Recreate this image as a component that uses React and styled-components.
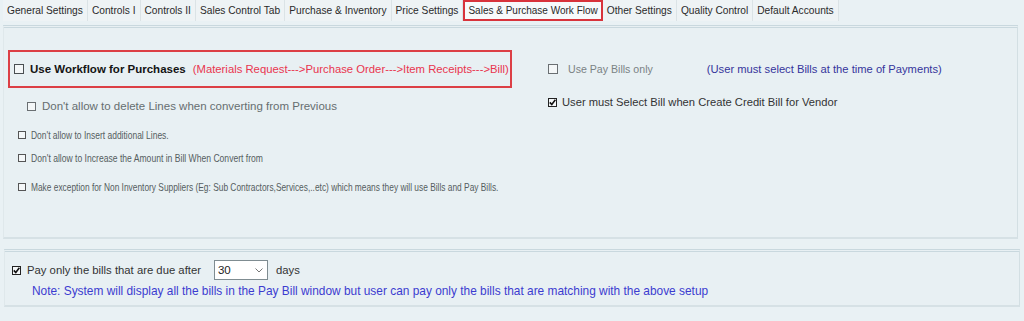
import React from "react";
import styled, { createGlobalStyle } from "styled-components";

const GlobalStyle = createGlobalStyle`
  html, body {
    margin: 0;
    padding: 0;
    background: #e9f1f4;
  }
  body {
    font-family: "Liberation Sans", Arial, sans-serif;
  }
`;

const Page = styled.div`
  width: 1024px;
  height: 321px;
  overflow: hidden;
  background: #e9f1f4;
  display: flex;
  flex-direction: column;
`;

const TabBar = styled.div`
  display: flex;
  align-items: stretch;
  height: 21px;
  padding-left: 3px;
`;

const Tab = styled.div`
  display: flex;
  align-items: ${(props) => (props.active ? "flex-start" : "center")};
  padding: ${(props) => (props.active ? "3px 3px 0 3px" : "0 4px")};
  font-size: ${(props) => (props.active ? 10 : 10.2)}px;
  color: #2a2a2a;
  white-space: nowrap;
  background: ${(props) => (props.active ? "#f7fafb" : "#eef3f5")};
  border: ${(props) => (props.active ? "2px solid #d8333b" : "none")};
  border-right: ${(props) =>
    props.active ? "2px solid #d8333b" : "1px solid #dbe3e6"};
  box-sizing: border-box;
  height: 21px;
`;

const Panel = styled.div`
  margin: ${(props) => props.margin};
  height: ${(props) => props.height}px;
  box-sizing: border-box;
  border-top: 3px double #c9d8de;
  border-left: 1px solid #dfe8eb;
  border-right: 1px solid #d3dfe3;
  border-bottom: 2px solid #d6e1e5;
  background: #e8f0f3;
`;

const TopGrid = styled.div`
  display: grid;
  grid-template-columns: 541px 1fr;
  padding-top: 22px;
`;

const Column = styled.div`
  display: flex;
  flex-direction: column;
  padding-left: ${(props) => props.pad || 0}px;
`;

const HighlightBox = styled.div`
  width: 504px;
  height: 38px;
  box-sizing: border-box;
  border: 2px solid #dc3f45;
  display: flex;
  align-items: center;
  padding-left: 4px;
  gap: 6px;
`;

const Row = styled.div`
  display: flex;
  align-items: center;
  height: ${(props) => props.h || 16}px;
  margin-top: ${(props) => props.mt || 0}px;
  margin-left: ${(props) => props.ml || 0}px;
  gap: ${(props) => (props.gap === undefined ? 6 : props.gap)}px;
  white-space: nowrap;
`;

const Label = styled.span`
  display: inline-block;
  font-size: ${(props) => props.size || 11}px;
  font-weight: ${(props) => (props.bold ? 700 : 400)};
  color: ${(props) => props.color || "#5f6769"};
  margin-left: ${(props) => props.ml || 0}px;
  transform: ${(props) => (props.squeeze ? `scaleX(${props.squeeze})` : "none")};
  transform-origin: left center;
`;

const Box = styled.span`
  display: inline-flex;
  align-items: center;
  justify-content: center;
  width: ${(props) => props.s || 9}px;
  height: ${(props) => props.s || 9}px;
  box-sizing: border-box;
  border: 1px solid ${(props) => props.border || "#4a4f52"};
  background: #f4f7f8;
  flex-shrink: 0;
`;

const BottomInner = styled.div`
  display: flex;
  flex-direction: column;
  padding: 6px 0 0 7px;
`;

const Select = styled.div`
  width: 54px;
  height: 20px;
  box-sizing: border-box;
  border: 1px solid #7f8c91;
  background: #ffffff;
  display: flex;
  align-items: center;
  justify-content: space-between;
  padding: 0 4px 0 3px;
  font-size: 11.5px;
  color: #222;
  margin-left: 7px;
  margin-right: 2px;
`;

function Check({ checked, s, border }) {
  return (
    <Box s={s} border={border}>
      {checked && (
        <svg width="7" height="7" viewBox="0 0 7 7">
          <path d="M0.8 3.4 L2.8 5.6 L6.4 0.8" stroke="#111" strokeWidth="1.6" fill="none" />
        </svg>
      )}
    </Box>
  );
}

const tabs = [
  "General Settings",
  "Controls I",
  "Controls II",
  "Sales Control Tab",
  "Purchase & Inventory",
  "Price Settings",
  "Sales & Purchase Work Flow",
  "Other Settings",
  "Quality Control",
  "Default Accounts",
];

export default function App() {
  return (
    <Page>
      <GlobalStyle />
      <TabBar>
        {tabs.map((t) => (
          <Tab key={t} active={t === "Sales & Purchase Work Flow"}>
            {t}
          </Tab>
        ))}
      </TabBar>

      <Panel margin="4px 6px 0 3px" height={214}>
        <TopGrid>
          <Column pad={4}>
            <HighlightBox>
              <Check s={10} />
              <Label bold size={11.5} color="#141414">
                Use Workflow for Purchases
              </Label>
              <Label size={11.3} color="#e8354f" ml={1}>
                (Materials Request---&gt;Purchase Order---&gt;Item Receipts---&gt;Bill)
              </Label>
            </HighlightBox>
            <Row mt={10} ml={19} h={16}>
              <Check s={9} border="#6a6f72" />
              <Label size={11.5} color="#666e70">
                Don't allow to delete Lines when converting from Previous
              </Label>
            </Row>
            <Row mt={13} ml={10} h={16} gap={5}>
              <Check s={8} border="#555" />
              <Label squeeze={0.77} size={11} color="#555d60">
                Don't allow to Insert additional Lines.
              </Label>
            </Row>
            <Row mt={7} ml={10} h={16} gap={5}>
              <Check s={8} border="#555" />
              <Label squeeze={0.78} size={11} color="#555d60">
                Don't allow to Increase the Amount in Bill When Convert from
              </Label>
            </Row>
            <Row mt={13} ml={10} h={16} gap={5}>
              <Check s={8} border="#555" />
              <Label squeeze={0.76} size={11} color="#555d60">
                Make exception for Non Inventory Suppliers (Eg: Sub Contractors,Services,..etc) which means they will use Bills and Pay Bills.
              </Label>
            </Row>
          </Column>

          <Column pad={3}>
            <Row mt={11} h={16} gap={10}>
              <Check s={10} border="#6a6f72" />
              <Label size={10.6} color="#7a8284">
                Use Pay Bills only
              </Label>
              <Label size={11.2} color="#35359c" ml={44}>
                (User must select Bills at the time of Payments)
              </Label>
            </Row>
            <Row mt={17} h={16} gap={5}>
              <Check checked s={9} border="#222" />
              <Label size={11.2} color="#333">
                User must Select Bill when Create Credit Bill for Vendor
              </Label>
            </Row>
          </Column>
        </TopGrid>
      </Panel>

      <Panel margin="10px 4px 0 4px" height={58}>
        <BottomInner>
          <Row h={20} gap={6} mt={2}>
            <Check checked s={9} border="#222" />
            <Label size={11.3} color="#333">
              Pay only the bills that are due after
            </Label>
            <Select>
              <span>30</span>
              <svg width="8" height="5" viewBox="0 0 8 5">
                <path d="M0.5 0.5 L4 4 L7.5 0.5" stroke="#777" strokeWidth="1" fill="none" />
              </svg>
            </Select>
            <Label size={11.3} color="#333">
              days
            </Label>
          </Row>
          <Row h={16} mt={3} ml={20}>
            <Label size={11.9} color="#3c3cd0">
              Note: System will display all the bills in the Pay Bill window but user can pay only the bills that are matching with the above setup
            </Label>
          </Row>
        </BottomInner>
      </Panel>
    </Page>
  );
}
